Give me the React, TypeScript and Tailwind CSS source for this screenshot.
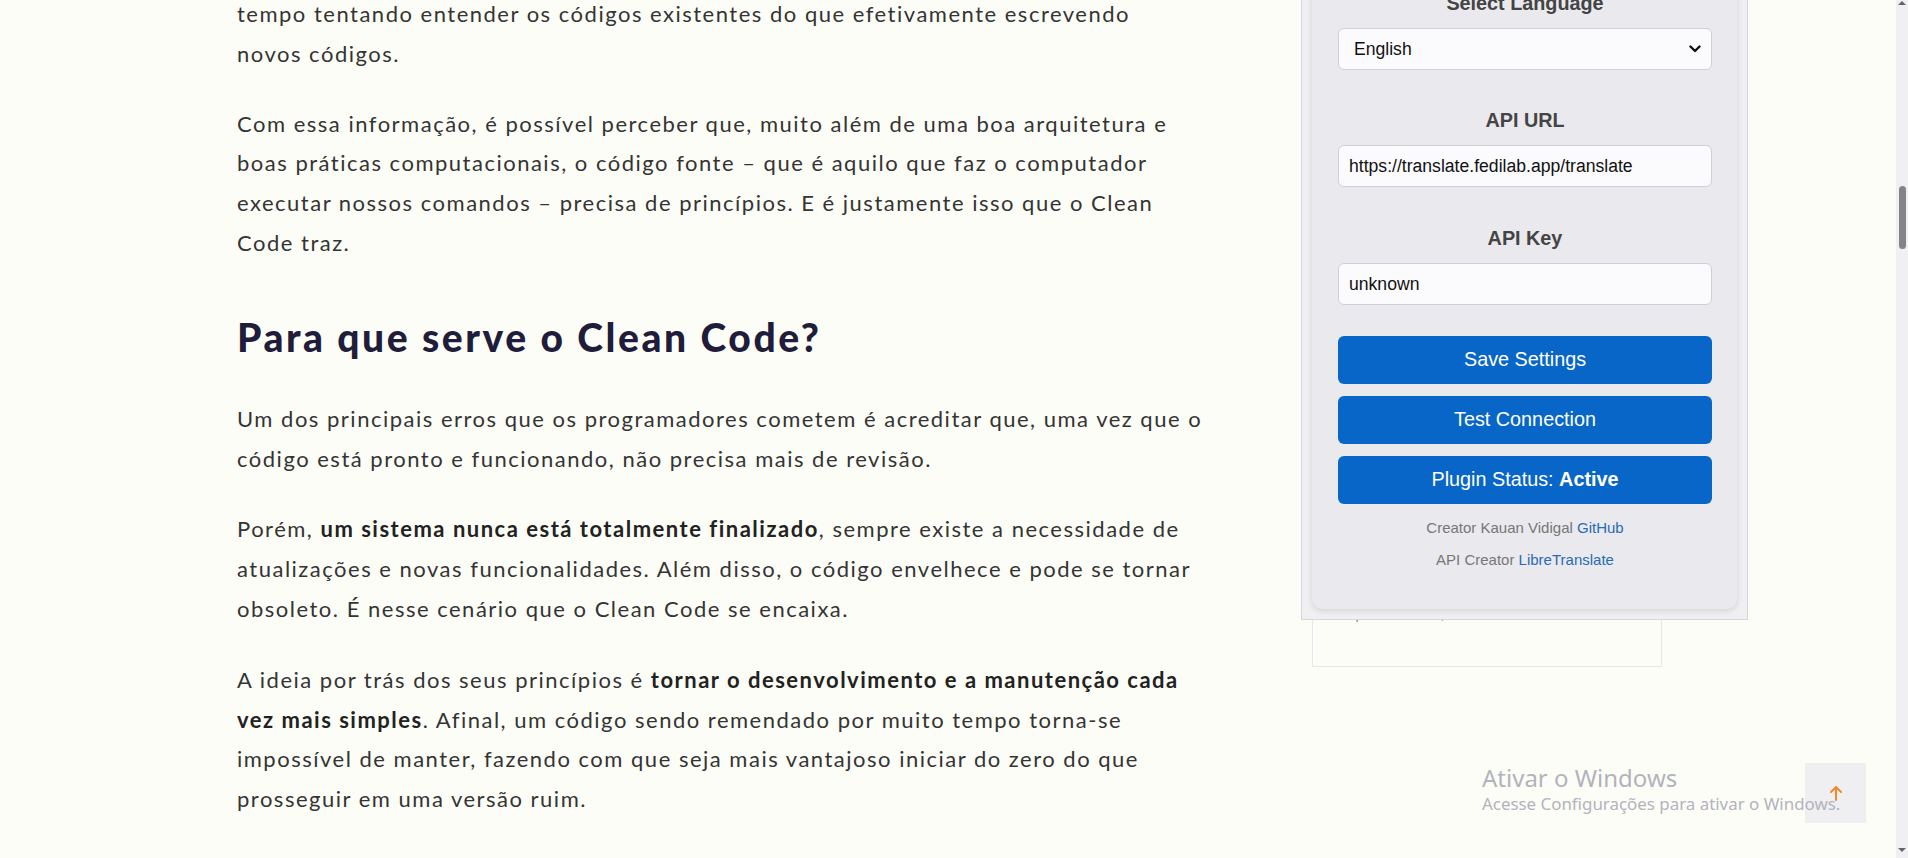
import React from "react";

const article = { fontFamily: "Lato, 'Noto Sans', sans-serif" };
const arial = { fontFamily: "'Liberation Sans', Arial, sans-serif" };
const win = { fontFamily: "'Noto Sans', 'Open Sans', sans-serif" };

function Chevron() {
  return (
    <svg width="12" height="8" viewBox="0 0 12 8" fill="none">
      <path d="M1.5 1.5 L6 6 L10.5 1.5" stroke="#111" strokeWidth="2.4" strokeLinecap="round" strokeLinejoin="round" />
    </svg>
  );
}

function Label({ children }: { children: React.ReactNode }) {
  return (
    <div className="text-center text-[19.8px] leading-[22px] font-bold text-[#444] mb-[14px]">{children}</div>
  );
}

export default function App() {
  return (
    <div className="relative w-[1908px] h-[858px] overflow-hidden bg-[#fdfdf7] flex">
      <div className="flex-1 flex">
        <article
          className="ml-[237px] w-[1000px] mt-[-6px] text-[22px] tracking-[1.5px] leading-[39.8px] text-[#343434] whitespace-nowrap"
          style={article}
        >
          <p className="mb-[30px]">
            tempo tentando entender os códigos existentes do que efetivamente escrevendo
            <br />
            novos códigos.
          </p>
          <p>
            Com essa informação, é possível perceber que, muito além de uma boa arquitetura e
            <br />
            boas práticas computacionais, o código fonte – que é aquilo que faz o computador
            <br />
            executar nossos comandos – precisa de princípios. E é justamente isso que o Clean
            <br />
            Code traz.
          </p>
          <h2 className="mt-[50px] mb-[38px] text-[39px] tracking-[2.55px] leading-[48px] font-black text-[#1f1d3b]">
            Para que serve o Clean Code?
          </h2>
          <p className="mb-[31px]">
            Um dos principais erros que os programadores cometem é acreditar que, uma vez que o
            <br />
            código está pronto e funcionando, não precisa mais de revisão.
          </p>
          <p className="mb-[31px]">
            Porém, <b className="font-bold text-[#222]">um sistema nunca está totalmente finalizado</b>, sempre existe a necessidade de
            <br />
            atualizações e novas funcionalidades. Além disso, o código envelhece e pode se tornar
            <br />
            obsoleto. É nesse cenário que o Clean Code se encaixa.
          </p>
          <p>
            A ideia por trás dos seus princípios é <b className="font-bold text-[#222]">tornar o desenvolvimento e a manutenção cada</b>
            <br />
            <b className="font-bold text-[#222]">vez mais simples</b>. Afinal, um código sendo remendado por muito tempo torna-se
            <br />
            impossível de manter, fazendo com que seja mais vantajoso iniciar do zero do que
            <br />
            prosseguir em uma versão ruim.
          </p>
        </article>

        <aside className="ml-[75px] w-[350px]">
          <div className="mt-[247px] h-[420px] border border-[#e6e6ec] flex flex-col justify-end pb-[42px] pl-[30px]">
            <div className="text-[14px] leading-[20px] text-[#8a8a8a]" style={arial}>
              A partir de R$ 9,90 ao mês
            </div>
          </div>
        </aside>
      </div>

      {/* scrollbar */}
      <div className="w-[12px] h-full bg-[#f0f0f3] flex flex-col items-center">
        <div className="w-0 h-0 mt-[1px] border-l-[4px] border-r-[4px] border-b-[4px] border-l-transparent border-r-transparent border-b-[#666]" />
        <div className="mt-[181px] w-[7px] h-[63px] rounded-[4px] bg-[#848484] ml-[1px]" />
        <div className="flex-1" />
        <div className="w-0 h-0 mb-[6px] border-l-[4px] border-r-[4px] border-t-[4px] border-l-transparent border-r-transparent border-t-[#666]" />
      </div>

      {/* translator settings panel (overlay) */}
      <div
        className="absolute left-[1301px] top-[-40px] w-[447px] bg-[#f0f0f3] border border-[#d6d6df] p-[10px] pb-[10px]"
        style={arial}
      >
        <div className="bg-[#e9e9ee] rounded-[10px] shadow-[0_2px_6px_rgba(0,0,0,0.12)] pl-[26px] pr-[25px] pt-[21px] pb-[41px]">
          <Label>Select Language</Label>
          <div className="h-[42px] rounded-[6px] border border-[#cfcfda] bg-[#fbfbfd] flex items-center justify-between pl-[15px] pr-[10px] text-[17.6px] text-[#111]">
            <span>English</span>
            <Chevron />
          </div>

          <div className="mt-[39px]">
            <Label>API URL</Label>
          </div>
          <div className="h-[42px] rounded-[6px] border border-[#cfcfda] bg-[#fbfbfd] flex items-center pl-[10px] text-[17.6px] text-[#111]">
            https://translate.fedilab.app/translate
          </div>

          <div className="mt-[40px]">
            <Label>API Key</Label>
          </div>
          <div className="h-[42px] rounded-[6px] border border-[#cfcfda] bg-[#fbfbfd] flex items-center pl-[10px] text-[17.6px] text-[#111]">
            unknown
          </div>

          <div className="mt-[31px] flex flex-col gap-[12px]">
            <div className="h-[48px] rounded-[6px] bg-[#0866c9] flex items-center justify-center text-white text-[19.8px]">
              Save Settings
            </div>
            <div className="h-[48px] rounded-[6px] bg-[#0866c9] flex items-center justify-center text-white text-[19.8px]">
              Test Connection
            </div>
            <div className="h-[48px] rounded-[6px] bg-[#0866c9] flex items-center justify-center text-white text-[19.8px]">
              Plugin Status:&nbsp;<b className="font-bold">Active</b>
            </div>
          </div>

          <p className="mt-[15px] text-center text-[15px] leading-[17px] text-[#777]">
            Creator Kauan Vidigal <span className="text-[#2a6cb3]">GitHub</span>
          </p>
          <p className="mt-[15px] text-center text-[15px] leading-[17px] text-[#777]">
            API Creator <span className="text-[#2a6cb3]">LibreTranslate</span>
          </p>
        </div>
      </div>

      {/* scroll to top button */}
      <div className="absolute left-[1805px] top-[763px] w-[61px] h-[60px] bg-[#ebebf0]/80 flex items-center justify-center">
        <svg width="14" height="16" viewBox="0 0 14 16" fill="none">
          <path d="M7 15 V2 M2 7 L7 2 L12 7" stroke="#ef8a2a" strokeWidth="2" strokeLinecap="round" strokeLinejoin="round" />
        </svg>
      </div>

      {/* windows activation watermark */}
      <div className="absolute left-[1482px] top-[763px] text-[#b3b3bd] pointer-events-none" style={win}>
        <div className="text-[24px] leading-[30px]">Ativar o Windows</div>
        <div className="text-[16.9px] leading-[22px]">Acesse Configurações para ativar o Windows.</div>
      </div>
    </div>
  );
}
